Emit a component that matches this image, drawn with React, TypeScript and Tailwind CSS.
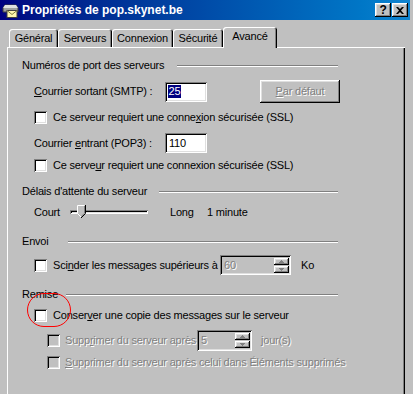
import type { ReactNode } from 'react'

// ── Win98 bevels ──────────────────────────────────────────────────────────────

const raised =
  'shadow-[inset_-1px_-1px_#000,inset_1px_1px_#fff,inset_-2px_-2px_#808080,inset_2px_2px_#dfdfdf]'
const sunken =
  'shadow-[inset_1px_1px_#808080,inset_-1px_-1px_#fff,inset_2px_2px_#000,inset_-2px_-2px_#dfdfdf]'
const dim = 'text-[#808080] [text-shadow:1px_1px_0_#fff]'

function Check({ disabled = false }: { disabled?: boolean }) {
  return (
    <span
      className={`block w-[13px] h-[13px] shrink-0 ${sunken} ${disabled ? 'bg-[#c0c0c0]' : 'bg-white'}`}
    />
  )
}

function Header({ label, gap }: { label: string; gap: string }) {
  return (
    <div className="flex items-center w-[316px] h-[13px]">
      <span className="shrink-0">{label}</span>
      <span className={`flex-1 h-[2px] border-t border-[#808080] border-b border-b-white ${gap}`} />
    </div>
  )
}

function Spin() {
  return (
    <div className="flex flex-col gap-[1px] py-[2px] pr-[2px]">
      <span className={`flex items-center justify-center w-[15px] h-[7px] bg-[#c0c0c0] ${raised}`}>
        <svg width="5" height="3" viewBox="0 0 5 3">
          <path d="M2 0h1v1h1v1h1v1H0V2h1V1h1z" fill="#808080" />
        </svg>
      </span>
      <span className={`flex items-center justify-center w-[15px] h-[7px] bg-[#c0c0c0] ${raised}`}>
        <svg width="5" height="3" viewBox="0 0 5 3">
          <path d="M0 0h5v1H4v1H3v1H2V2H1V1H0z" fill="#808080" />
        </svg>
      </span>
    </div>
  )
}

function U({ children }: { children: ReactNode }) {
  return <span className="underline underline-offset-[1px]">{children}</span>
}

// ── Title bar ─────────────────────────────────────────────────────────────────

function TitleBar() {
  return (
    <div className="flex items-center h-[20px] mr-[3px] pl-[2px] pr-[2px] bg-gradient-to-r from-[#000080] to-[#1084d0]">
      <svg width="17" height="16" viewBox="0 0 17 16" className="shrink-0">
        <path d="M3 3h11l2 3v4H1V6z" fill="#a0a0a0" stroke="#404040" />
        <path d="M3 3h11l2 3H1z" fill="#e0e0e0" />
        <rect x="5" y="8.5" width="10" height="7" fill="#fff8b0" stroke="#404040" />
        <path d="M5 8.5l5 4 5-4" fill="none" stroke="#808040" />
      </svg>
      <span className="ml-[3px] text-white font-bold text-[12px] tracking-normal">Propriétés de pop.skynet.be</span>
      <div className="ml-auto flex items-center gap-[1px]">
        <span className={`flex items-center justify-center w-[16px] h-[14px] bg-[#c0c0c0] font-bold text-[12px] leading-none ${raised}`}>
          ?
        </span>
        <span className={`flex items-center justify-center w-[16px] h-[14px] bg-[#c0c0c0] ${raised}`}>
          <svg width="8" height="7" viewBox="0 0 8 7">
            <path d="M0 0h2l2 2 2-2h2L5 3.5 8 7H6L4 5 2 7H0l3-3.5z" fill="#000" />
          </svg>
        </span>
      </div>
    </div>
  )
}

// ── Tabs ──────────────────────────────────────────────────────────────────────

const tabShape =
  'rounded-t-[3px] shadow-[inset_1px_1px_#fff,inset_-1px_0_#000,inset_-2px_0_#808080]'

function Tabs() {
  const tabs = [
    { label: 'Général', w: 'w-[49px]' },
    { label: 'Serveurs', w: 'w-[54px]' },
    { label: 'Connexion', w: 'w-[61px]' },
    { label: 'Sécurité', w: 'w-[50px]' },
  ]
  return (
    <div className="flex items-end h-[20px] mt-[7px] pl-[2px]">
      {tabs.map((t) => (
        <div key={t.label} className={`flex items-center justify-center h-[18px] ${t.w} ${tabShape}`}>
          {t.label}
        </div>
      ))}
      <div className={`relative z-10 -mb-[1px] flex items-start justify-center pt-[3px] h-[21px] w-[54px] bg-[#c0c0c0] ${tabShape}`}>
        Avancé
      </div>
    </div>
  )
}

// ── Page ──────────────────────────────────────────────────────────────────────

export default function App() {
  return (
    <div className="relative w-[413px] h-[394px] overflow-hidden whitespace-nowrap bg-[#c0c0c0] text-black text-[11px] leading-[13px] tracking-[-0.2px] font-['Liberation_Sans',Arial,sans-serif]">
      <TitleBar />
      <div className="pl-[7px]">
        <Tabs />
        <div className="w-[398px] h-[360px] border-l border-t border-white shadow-[inset_-1px_0_#000,inset_-2px_0_#808080] pl-[14px]">
          <div className="mt-[11px]">
            <Header label="Numéros de port des serveurs" gap="ml-[13px]" />
          </div>

          <div className="mt-[8px] flex items-center h-[23px] pl-[12px]">
            <span className="w-[131px]">
              <U>C</U>ourrier sortant (SMTP) :
            </span>
            <span className={`flex items-center w-[42px] h-[20px] bg-white pl-[3px] ${sunken}`}>
              <span className="bg-[#000080] text-white px-[0.5px]">25</span>
            </span>
            <span className={`ml-[53px] flex items-center justify-center w-[80px] h-[23px] ${raised} ${dim}`}>
              <U>P</U>ar défaut
            </span>
          </div>

          <div className="mt-[8px] flex items-center gap-[6px] h-[13px] pl-[12px]">
            <Check />
            <span>
              Ce serveur requiert une conne<U>x</U>ion sécurisée (SSL)
            </span>
          </div>

          <div className="mt-[9px] flex items-center h-[20px] pl-[12px]">
            <span className="w-[131px]">
              Courrier <U>e</U>ntrant (POP3) :
            </span>
            <span className={`flex items-center w-[42px] h-[20px] bg-white pl-[4px] ${sunken}`}>110</span>
          </div>

          <div className="mt-[6px] flex items-center gap-[6px] h-[13px] pl-[12px]">
            <Check />
            <span>
              Ce serve<U>u</U>r requiert une connexion sécurisée (SSL)
            </span>
          </div>

          <div className="mt-[13px]">
            <Header label="Délais d'attente du serveur" gap="ml-[12px]" />
          </div>

          <div className="mt-[7px] flex items-center h-[14px] pl-[12px]">
            <span className="w-[36px]">Court</span>
            <div className="relative w-[78px] h-[14px] flex items-center">
              <span className="block w-full h-[4px] bg-[#c0c0c0] shadow-[inset_1px_1px_#808080,inset_-1px_-1px_#fff,inset_2px_2px_#000,inset_-2px_-2px_#dfdfdf]" />
              <svg width="9" height="13" viewBox="0 0 9 13" className="absolute left-[7px] top-0">
                <path d="M0.5 0.5h7v8l-3.5 3.5-3.5-3.5z" fill="#c0c0c0" />
                <path d="M0.5 8.5v-8h7" fill="none" stroke="#fff" />
                <path d="M8.5 0v8.5L4 13" fill="none" stroke="#000" />
                <path d="M7.5 1v7.2L4 11.7" fill="none" stroke="#808080" />
                <path d="M0.5 8.5L4 12" fill="none" stroke="#fff" />
              </svg>
            </div>
            <span className="ml-[22px] w-[37px]">Long</span>
            <span>1 minute</span>
          </div>

          <div className="mt-[16px]">
            <Header label="Envoi" gap="ml-[19px]" />
          </div>

          <div className="mt-[7px] flex items-center h-[20px] pl-[12px]">
            <Check />
            <span className="ml-[6px] w-[167px]">
              Sci<U>n</U>der les messages supérieurs à
            </span>
            <span className={`flex items-center justify-between w-[71px] h-[20px] bg-[#c0c0c0] pl-[4px] ${sunken}`}>
              <span className={dim}>60</span>
              <Spin />
            </span>
            <span className="ml-[10px]">Ko</span>
          </div>

          <div className="mt-[13px]">
            <Header label="Remise" gap="ml-[8px]" />
          </div>

          <div className="mt-[8px] flex items-center gap-[6px] h-[13px] pl-[12px]">
            <Check />
            <span>
              Conser<U>v</U>er une copie des messages sur le serveur
            </span>
          </div>

          <div className="mt-[8px] flex items-center h-[21px] pl-[25px]">
            <Check disabled />
            <span className={`ml-[5px] w-[132px] ${dim}`}>
              Supp<U>r</U>imer du serveur après
            </span>
            <span className={`flex items-center justify-between w-[55px] h-[21px] bg-[#c0c0c0] pl-[4px] ${sunken}`}>
              <span className={dim}>5</span>
              <Spin />
            </span>
            <span className={`ml-[9px] ${dim}`}>jour(s)</span>
          </div>

          <div className="mt-[5px] flex items-center h-[13px] pl-[25px]">
            <Check disabled />
            <span className={`ml-[5px] ${dim}`}>
              <U>S</U>upprimer du serveur après celui dans Éléments supprimés
            </span>
          </div>
        </div>
      </div>

      {/* hand-drawn highlight around the "Conserver" checkbox */}
      <span className="absolute left-[27px] top-[293px] w-[44px] h-[34px] rounded-full border border-[#ff0000]" />
    </div>
  )
}
